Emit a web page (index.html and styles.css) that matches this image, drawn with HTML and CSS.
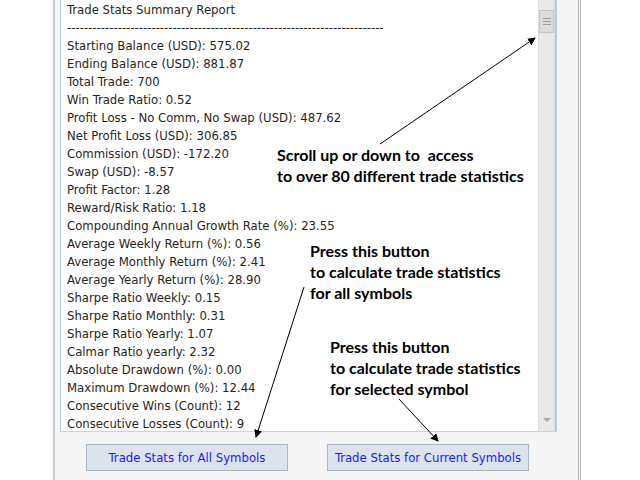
FILE: index.html
```html
<!DOCTYPE html>
<html>
<head>
  <title>Trade Stats Summary Report</title>
  <link rel="stylesheet" href="styles.css">
</head>
<body>
  <div class="panel">
    <div class="report">
      <div class="lines">
        <div>Trade Stats Summary Report</div>
        <div>---------------------------------------------------------------------------</div>
        <div>Starting Balance (USD): 575.02</div>
        <div>Ending Balance (USD): 881.87</div>
        <div>Total Trade: 700</div>
        <div>Win Trade Ratio: 0.52</div>
        <div>Profit Loss - No Comm, No Swap (USD): 487.62</div>
        <div>Net Profit Loss (USD): 306.85</div>
        <div>Commission (USD): -172.20</div>
        <div>Swap (USD): -8.57</div>
        <div>Profit Factor: 1.28</div>
        <div>Reward/Risk Ratio: 1.18</div>
        <div>Compounding Annual Growth Rate (%): 23.55</div>
        <div>Average Weekly Return (%): 0.56</div>
        <div>Average Monthly Return (%): 2.41</div>
        <div>Average Yearly Return (%): 28.90</div>
        <div>Sharpe Ratio Weekly: 0.15</div>
        <div>Sharpe Ratio Monthly: 0.31</div>
        <div>Sharpe Ratio Yearly: 1.07</div>
        <div>Calmar Ratio yearly: 2.32</div>
        <div>Absolute Drawdown (%): 0.00</div>
        <div>Maximum Drawdown (%): 12.44</div>
        <div>Consecutive Wins (Count): 12</div>
        <div>Consecutive Losses (Count): 9</div>
      </div>
      <div class="scrollbar">
        <div class="thumb"><span></span><span></span><span></span></div>
        <div class="track"></div>
        <div class="arrow-down"></div>
      </div>
    </div>
    <div class="buttons">
      <button class="btn">Trade Stats for All Symbols</button>
      <button class="btn">Trade Stats for Current Symbols</button>
    </div>
  </div>

  <div class="note note-scroll">Scroll up or down to&nbsp; access<br>to over 80 different trade statistics</div>
  <div class="note note-all">Press this button<br>to calculate trade statistics<br>for all symbols</div>
  <div class="note note-current">Press this button<br>to calculate trade statistics<br>for selected symbol</div>

  <svg class="arrows" width="640" height="480" viewBox="0 0 640 480">
    <defs>
      <marker id="head" markerWidth="8" markerHeight="8" refX="7" refY="4" orient="auto" markerUnits="userSpaceOnUse">
        <path d="M0,0 L8,4 L0,8 Z" fill="#000"/>
      </marker>
    </defs>
    <line x1="380" y1="144" x2="535" y2="38" stroke="#000" stroke-width="1" marker-end="url(#head)"/>
    <line x1="304" y1="287" x2="256" y2="437" stroke="#000" stroke-width="1" marker-end="url(#head)"/>
    <line x1="399" y1="399" x2="438" y2="441" stroke="#000" stroke-width="1" marker-end="url(#head)"/>
  </svg>
</body>
</html>
```

FILE: styles.css
```css
* {
  box-sizing: border-box;
  margin: 0;
  padding: 0;
}

body {
  background-color: #fff;
  width: 640px;
  height: 480px;
  overflow: hidden;
  position: relative;
}

.panel {
  margin-left: 53px;
  width: 528px;
  height: 480px;
  background-color: #f5f5f5;
  border-left: 2px solid #c8c8c8;
  border-right: 3px double #b4b4b4;
  padding-left: 5px;
  padding-right: 21px;
}

.report {
  display: flex;
  height: 432px;
  background-color: #fff;
  border-left: 1px solid #b9c9d9;
  border-right: 2px solid #b9c9d9;
  border-bottom: 1px solid #c8d4e0;
}

.lines {
  flex: 1;
  padding: 1px 0 0 6px;
  font-family: "DejaVu Sans Condensed", "DejaVu Sans", sans-serif;
  font-stretch: condensed;
  font-size: 13px;
  line-height: 18px;
  color: #2a2420;
  white-space: nowrap;
  overflow: hidden;
}

.scrollbar {
  width: 17px;
  display: flex;
  flex-direction: column;
  background-color: #e8e8e8;
  border-left: 1px solid #dcdcdc;
  border-right: 1px solid #dcdcdc;
}

.thumb {
  margin-top: 10px;
  height: 23px;
  border: 1px solid #c4c4c4;
  background-color: #dcdcdc;
  display: flex;
  flex-direction: column;
  align-items: center;
  justify-content: center;
  gap: 2px;
}

.thumb span {
  display: block;
  width: 8px;
  height: 1px;
  background-color: #9a9a9a;
}

.track {
  flex: 1;
}

.arrow-down {
  align-self: center;
  margin-bottom: 9px;
  width: 0;
  height: 0;
  border-left: 4px solid transparent;
  border-right: 4px solid transparent;
  border-top: 4px solid #a8a8a8;
}

.buttons {
  display: flex;
  gap: 39px;
  padding: 12px 0 0 26px;
}

.btn {
  width: 202px;
  height: 27px;
  background-color: #dde3ec;
  border: 1px solid #a9b6c8;
  color: #1a1aff;
  font-family: "DejaVu Sans Condensed", "DejaVu Sans", sans-serif;
  font-stretch: condensed;
  font-size: 13px;
}

.note {
  position: absolute;
  font-family: Lato, "Open Sans", sans-serif;
  font-weight: bold;
  font-size: 16px;
  line-height: 21px;
  color: #000;
  white-space: nowrap;
}

.note-scroll {
  left: 277px;
  top: 144px;
}

.note-all {
  left: 310px;
  top: 240px;
}

.note-current {
  left: 330px;
  top: 336px;
}

.arrows {
  position: absolute;
  left: 0;
  top: 0;
}
```
